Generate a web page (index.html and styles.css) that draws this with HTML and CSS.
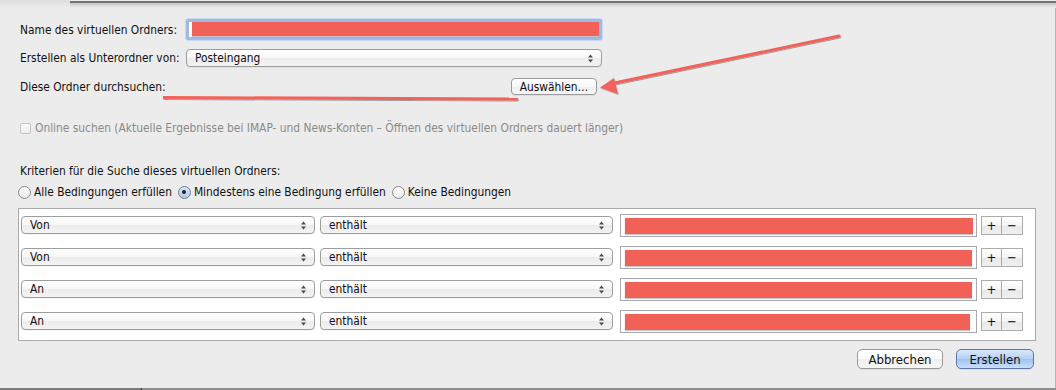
FILE: index.html
```html
<!DOCTYPE html>
<html lang="de">
<head>
    <meta charset="UTF-8">
    <meta name="viewport" content="width=device-width, initial-scale=1.0">
    <title>Virtueller Ordner</title>
    <link rel="stylesheet" href="styles.css">
</head>
<body>
    <div class="window">
        <div class="sheet-edge">
            <div class="edge-left"></div>
            <div class="edge-right"></div>
        </div>

        <div class="content">
            <div class="field-row name-row">
                <span class="field-label">Name des virtuellen Ordners:</span>
                <div class="name-field"><div class="redacted"></div></div>
            </div>

            <div class="field-row parent-row">
                <span class="field-label">Erstellen als Unterordner von:</span>
                <div class="popup popup-parent">
                    <span>Posteingang</span>
                    <svg class="updown" width="5" height="9" viewBox="0 0 5 9"><path d="M0 3.5 L2.5 0.5 L5 3.5 Z M0 5.5 L2.5 8.5 L5 5.5 Z"/></svg>
                </div>
            </div>

            <div class="field-row folders-row">
                <span>Diese Ordner durchsuchen:</span>
                <button class="push small">Auswählen…</button>
            </div>

            <div class="check-row">
                <span class="checkbox"></span>
                Online suchen (Aktuelle Ergebnisse bei IMAP- und News-Konten – Öffnen des virtuellen Ordners dauert länger)
            </div>

            <div class="section-title">Kriterien für die Suche dieses virtuellen Ordners:</div>

            <div class="radio-row">
                <span class="radio-item"><span class="radio"></span>Alle Bedingungen erfüllen</span>
                <span class="radio-item"><span class="radio on"></span>Mindestens eine Bedingung erfüllen</span>
                <span class="radio-item"><span class="radio"></span>Keine Bedingungen</span>
            </div>

            <!-- Suchkriterien -->
            <div class="criteria">
                <div class="crit-row">
                    <div class="popup popup-field"><span>Von</span><svg class="updown" width="5" height="9" viewBox="0 0 5 9"><path d="M0 3.5 L2.5 0.5 L5 3.5 Z M0 5.5 L2.5 8.5 L5 5.5 Z"/></svg></div>
                    <div class="popup popup-op"><span>enthält</span><svg class="updown" width="5" height="9" viewBox="0 0 5 9"><path d="M0 3.5 L2.5 0.5 L5 3.5 Z M0 5.5 L2.5 8.5 L5 5.5 Z"/></svg></div>
                    <div class="text-field"><div class="redacted"></div></div>
                    <div class="stepper"><span>+</span><span>−</span></div>
                </div>
                <div class="crit-row">
                    <div class="popup popup-field"><span>Von</span><svg class="updown" width="5" height="9" viewBox="0 0 5 9"><path d="M0 3.5 L2.5 0.5 L5 3.5 Z M0 5.5 L2.5 8.5 L5 5.5 Z"/></svg></div>
                    <div class="popup popup-op"><span>enthält</span><svg class="updown" width="5" height="9" viewBox="0 0 5 9"><path d="M0 3.5 L2.5 0.5 L5 3.5 Z M0 5.5 L2.5 8.5 L5 5.5 Z"/></svg></div>
                    <div class="text-field short"><div class="redacted"></div></div>
                    <div class="stepper"><span>+</span><span>−</span></div>
                </div>
                <div class="crit-row">
                    <div class="popup popup-field"><span>An</span><svg class="updown" width="5" height="9" viewBox="0 0 5 9"><path d="M0 3.5 L2.5 0.5 L5 3.5 Z M0 5.5 L2.5 8.5 L5 5.5 Z"/></svg></div>
                    <div class="popup popup-op"><span>enthält</span><svg class="updown" width="5" height="9" viewBox="0 0 5 9"><path d="M0 3.5 L2.5 0.5 L5 3.5 Z M0 5.5 L2.5 8.5 L5 5.5 Z"/></svg></div>
                    <div class="text-field short"><div class="redacted"></div></div>
                    <div class="stepper"><span>+</span><span>−</span></div>
                </div>
                <div class="crit-row">
                    <div class="popup popup-field"><span>An</span><svg class="updown" width="5" height="9" viewBox="0 0 5 9"><path d="M0 3.5 L2.5 0.5 L5 3.5 Z M0 5.5 L2.5 8.5 L5 5.5 Z"/></svg></div>
                    <div class="popup popup-op"><span>enthält</span><svg class="updown" width="5" height="9" viewBox="0 0 5 9"><path d="M0 3.5 L2.5 0.5 L5 3.5 Z M0 5.5 L2.5 8.5 L5 5.5 Z"/></svg></div>
                    <div class="text-field shorter"><div class="redacted"></div></div>
                    <div class="stepper"><span>+</span><span>−</span></div>
                </div>
            </div>

            <div class="actions">
                <button class="push large cancel">Abbrechen</button>
                <button class="push large default">Erstellen</button>
            </div>
        </div>

        <div class="bottom-edge">
            <div class="bottom-left"></div>
            <div class="bottom-right"></div>
        </div>

        <!-- Markierungen über dem Dialog -->
        <svg class="annotations" width="1056" height="390" viewBox="0 0 1056 390">
            <defs>
                <filter id="shade" x="-10%" y="-50%" width="120%" height="200%">
                    <feDropShadow dx="0.6" dy="1" stdDeviation="0.7" flood-color="#000" flood-opacity="0.35"/>
                </filter>
            </defs>
            <g filter="url(#shade)">
                <line x1="163" y1="97.5" x2="518" y2="99" stroke="#f2625a" stroke-width="3"/>
                <line x1="839" y1="36" x2="612" y2="83.5" stroke="#f2625a" stroke-width="3" stroke-linecap="round"/>
                <polygon points="600,87.5 614,78 618,94" fill="#f2625a"/>
            </g>
        </svg>
    </div>
</body>
</html>
```

FILE: styles.css
```css
body {
    margin: 0;
    background: #ececec;
    font-family: "DejaVu Sans Condensed", "DejaVu Sans", sans-serif;
    font-size: 11.85px;
    color: #111;
}

.window {
    position: relative;
    width: 1056px;
    height: 390px;
    display: flex;
    flex-direction: column;
    overflow: hidden;
}

.sheet-edge {
    display: flex;
    height: 8px;
    flex-shrink: 0;
}

.edge-left {
    width: 70px;
    background: linear-gradient(#dedede, #ececec);
}

.edge-right {
    flex: 1;
    margin-top: 1px;
    border-top: 2px solid #727272;
    background: linear-gradient(#c6c6c6, #ececec);
}

.content {
    flex: 1;
    padding: 0 18px;
    box-shadow: inset -1px 0 0 #b4b4b4;
}

.field-row {
    display: flex;
    align-items: center;
    padding-left: 2px;
}

.field-label {
    width: 166px;
    flex-shrink: 0;
}

.name-row {
    margin-top: 11px;
    height: 21px;
}

.name-field {
    box-sizing: border-box;
    width: 416px;
    height: 21px;
    padding: 0 0 1px 3px;
    background: #fff;
    border: 3px solid #9dbbe4;
    border-radius: 2px;
    box-shadow: 0 0 0 1px #c8daf1;
}

.redacted {
    height: 100%;
    background: #f26157;
    box-shadow: 0 1px 1px rgba(0, 0, 0, 0.22);
}

.popup {
    box-sizing: border-box;
    height: 18px;
    display: flex;
    align-items: center;
    justify-content: space-between;
    padding: 0 8px 0 8px;
    border: 1px solid #9d9d9d;
    border-radius: 4px;
    background: linear-gradient(#ffffff, #f7f7f7 50%, #ececec 52%, #f3f3f3);
    box-shadow: 0 1px 0 rgba(0, 0, 0, 0.04);
}

.updown path {
    fill: #4a4a4a;
}

.popup-parent {
    width: 416px;
}

.parent-row {
    margin-top: 9px;
    height: 18px;
}

.folders-row {
    margin-top: 11px;
    height: 17px;
    width: 577px;
    justify-content: space-between;
}

.push {
    box-sizing: border-box;
    padding: 0;
    font-family: inherit;
    font-size: 11.85px;
    color: #111;
    border: 1px solid #9a9a9a;
    border-radius: 4px;
    background: linear-gradient(#ffffff, #f8f8f8 50%, #efefef 52%, #f6f6f6);
    box-shadow: 0 1px 0 rgba(0, 0, 0, 0.06);
}

.push.small {
    width: 86px;
    height: 17px;
}

.check-row {
    margin-top: 27px;
    height: 12px;
    display: flex;
    align-items: center;
    padding-left: 2px;
    color: #8a8a8a;
}

.checkbox {
    box-sizing: border-box;
    width: 11px;
    height: 11px;
    margin-right: 4px;
    border: 1px solid #c3c3c3;
    border-radius: 2px;
    background: linear-gradient(#fbfbfb, #ededed);
}

.section-title {
    margin-top: 30px;
    height: 15px;
    line-height: 15px;
    padding-left: 2px;
}

.radio-row {
    margin-top: 6px;
    height: 14px;
    display: flex;
    align-items: center;
    gap: 6px;
}

.radio-item {
    display: flex;
    align-items: center;
}

.radio {
    position: relative;
    box-sizing: border-box;
    width: 13px;
    height: 13px;
    margin-right: 3px;
    border: 1px solid #8a8a8a;
    border-radius: 50%;
    background: linear-gradient(#fdfdfd, #e9e9e9);
}

.radio.on {
    border-color: #6d7f9c;
    background: linear-gradient(#dbe6f5, #b3c7e4);
}

.radio.on::after {
    content: "";
    position: absolute;
    left: 3.5px;
    top: 3.5px;
    width: 4px;
    height: 4px;
    border-radius: 50%;
    background: #1f1f1f;
}

.criteria {
    box-sizing: border-box;
    margin-top: 9px;
    width: 1018px;
    height: 133px;
    padding: 4px 0 0 2px;
    background: #fff;
    border: 1px solid #aaaaaa;
}

.crit-row {
    display: flex;
    align-items: center;
    height: 24px;
    margin-bottom: 8px;
}

.popup-field {
    width: 294px;
}

.popup-op {
    width: 293px;
    margin-left: 5px;
}

.text-field {
    box-sizing: border-box;
    width: 357px;
    height: 23px;
    margin-left: 7px;
    padding: 3px 3px 2px 4px;
    border: 1px solid #a9a9a9;
    background: #fff;
}

.text-field.short {
    padding-right: 4px;
}

.text-field.shorter {
    padding-right: 6px;
}

.stepper {
    display: flex;
    height: 19px;
    margin-left: 4px;
}

.stepper span {
    box-sizing: border-box;
    width: 21px;
    height: 19px;
    display: flex;
    align-items: center;
    justify-content: center;
    font-size: 13px;
    border: 1px solid #acacac;
    background: linear-gradient(#ffffff, #f4f4f4 50%, #e9e9e9 52%, #f0f0f0);
}

.stepper span + span {
    border-left: none;
}

.actions {
    display: flex;
    justify-content: flex-end;
    gap: 13px;
    width: 1016px;
    margin-top: 8px;
}

.push.large {
    height: 20px;
    font-size: 13px;
    border-radius: 5px;
}

.push.cancel {
    width: 86px;
}

.push.default {
    width: 78px;
    border-color: #5a78a8;
    background: linear-gradient(#d8e8fc, #b4d0f4 50%, #9fc2f0 52%, #c9e0fb);
}

.bottom-edge {
    display: flex;
    height: 2px;
    flex-shrink: 0;
}

.bottom-left {
    width: 141px;
    background: #7c7c7c;
}

.bottom-right {
    flex: 1;
    border-left: 1px solid #3c3c3c;
    background: #8e8e8e;
}

.annotations {
    position: absolute;
    left: 0;
    top: 0;
    pointer-events: none;
}
```
